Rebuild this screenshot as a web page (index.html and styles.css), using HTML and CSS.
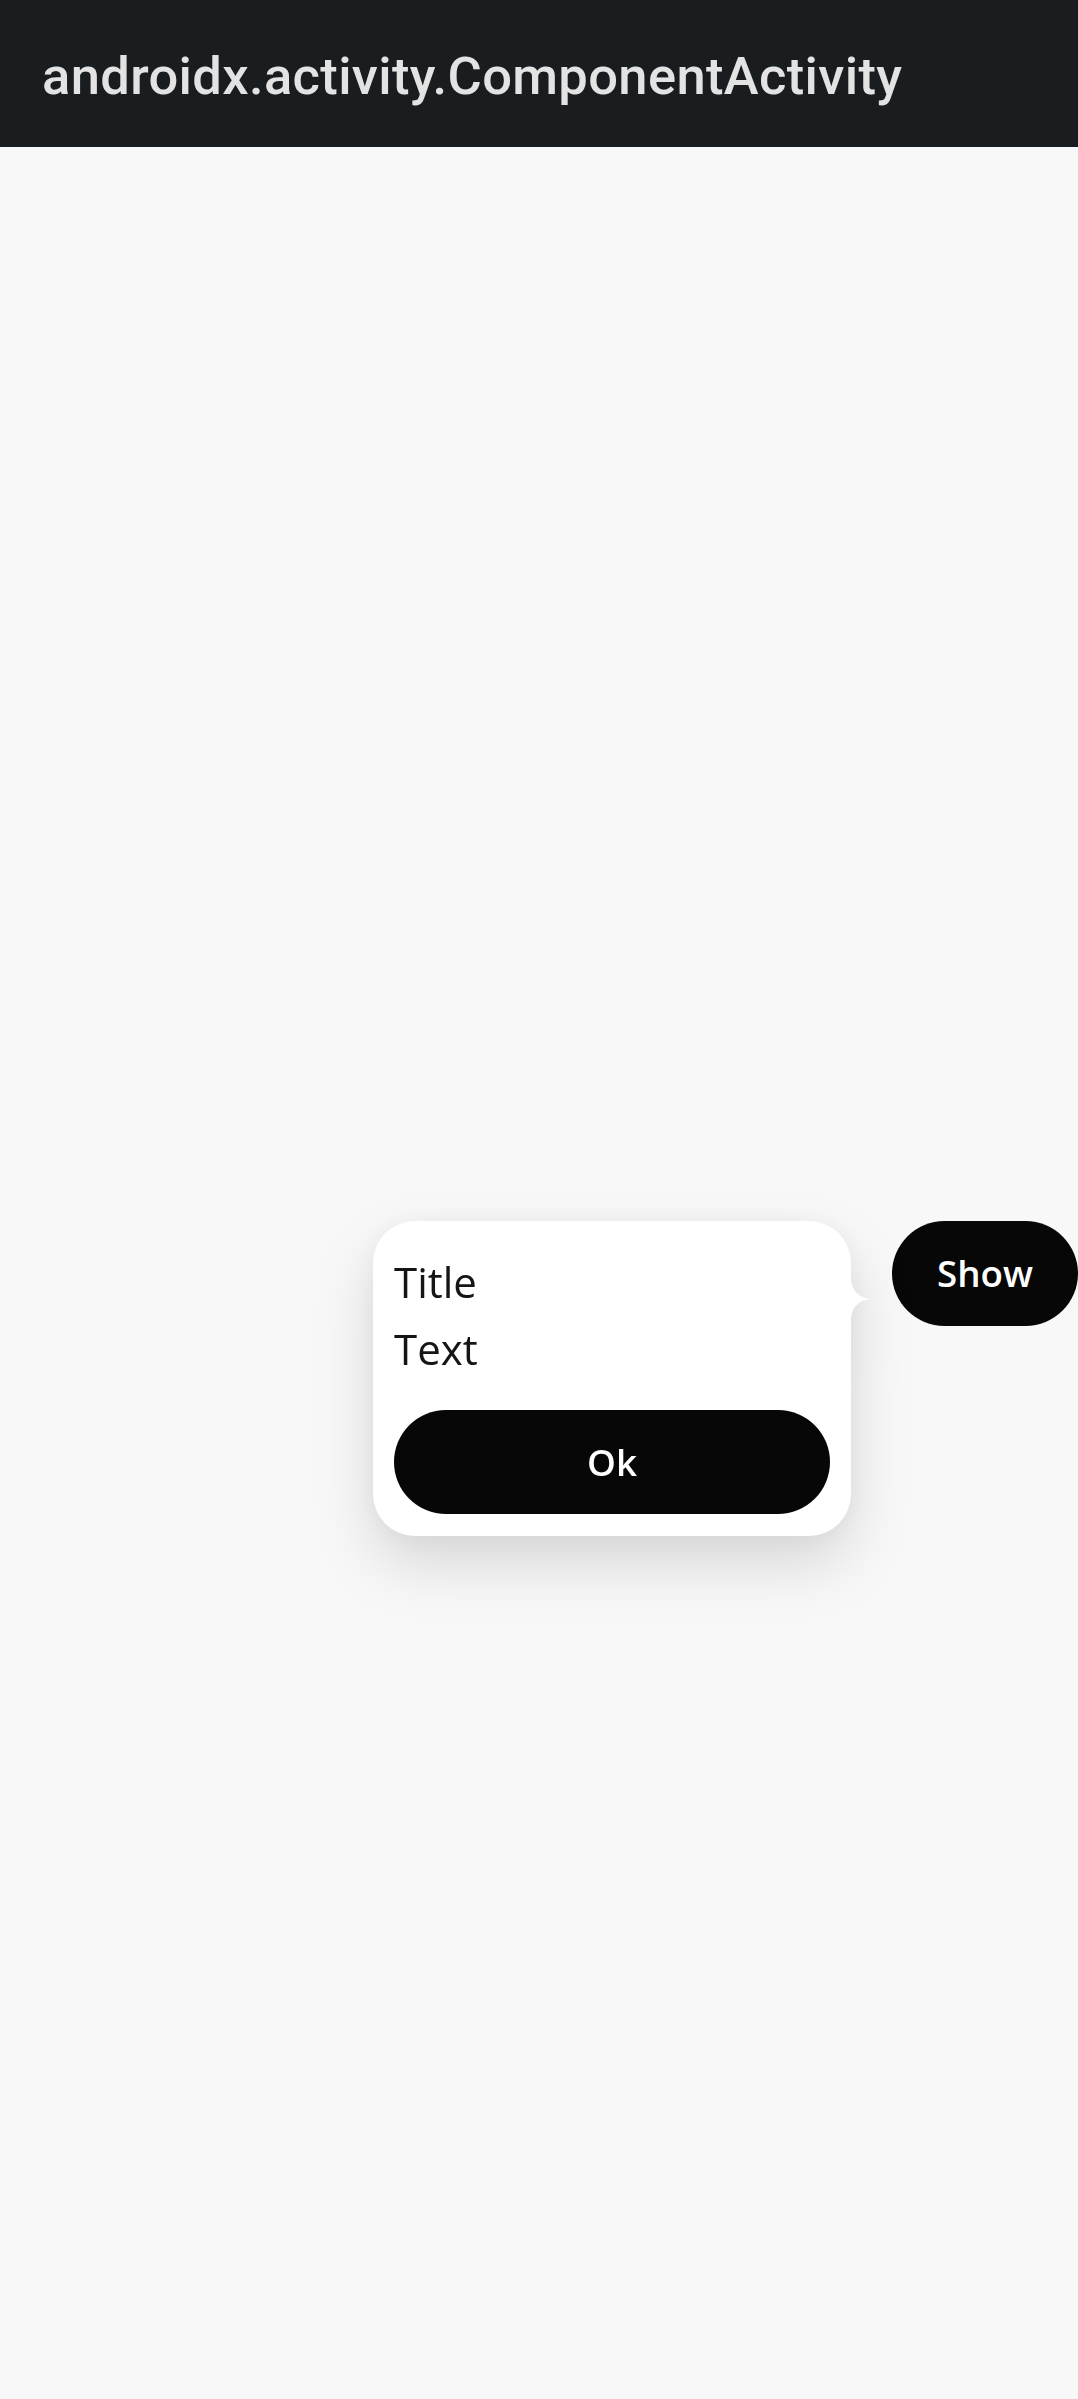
FILE: index.html
```html
<!DOCTYPE html>
<html lang="en">
<head>
<meta charset="utf-8">
<title>androidx.activity.ComponentActivity</title>
<link rel="stylesheet" href="styles.css">
</head>
<body>
<header class="appbar">
  <h1 class="appbar-title">androidx.activity.ComponentActivity</h1>
</header>
<main class="screen">
  <div class="anchor">
    <div class="tooltip">
      <div class="tooltip-body">
        <p class="tooltip-title">Title</p>
        <p class="tooltip-text">Text</p>
        <button class="btn btn-ok" type="button">Ok</button>
      </div>
      <svg class="tooltip-pointer" width="22" height="70" viewBox="0 0 22 70" aria-hidden="true">
        <path d="M0,0 H2 V17 A20,20 0 0 0 22,37 A20,20 0 0 0 2,57 V70 H0 Z" fill="#ffffff"/>
      </svg>
    </div>
    <button class="btn btn-show" type="button">Show</button>
  </div>
</main>
</body>
</html>
```

FILE: styles.css
```css
html, body {
  margin: 0;
  padding: 0;
}

body {
  background: #f8f8f8;
  width: 1078px;
  height: 2399px;
  overflow: hidden;
}

.appbar {
  height: 147px;
  background: #1a1d20;
  display: flex;
  align-items: center;
  padding-left: 42px;
  box-sizing: border-box;
}

.appbar-title {
  margin: 0;
  padding-top: 5px;
  font-family: Roboto, "Liberation Sans", sans-serif;
  font-weight: 500;
  font-size: 52.5px;
  line-height: 1.2;
  color: #e3e3e3;
  letter-spacing: 0.35px;
}

.screen {
  height: 2252px;
  display: flex;
  align-items: center;
  justify-content: flex-end;
}

.anchor {
  position: relative;
}

.btn {
  border: none;
  margin: 0;
  background: #070707;
  color: #ffffff;
  font-family: "Open Sans", "Liberation Sans", sans-serif;
  font-weight: 600;
  font-size: 36.75px;
  cursor: pointer;
  display: flex;
  align-items: center;
  justify-content: center;
}

.btn-show {
  width: 186px;
  height: 105px;
  padding: 0;
  border-radius: 52.5px;
}

.tooltip {
  position: absolute;
  top: 0;
  right: calc(100% + 41px);
  width: 478px;
  filter: drop-shadow(0 28px 30px rgba(0, 0, 0, 0.13)) drop-shadow(0 0 12px rgba(0, 0, 0, 0.04));
}

.tooltip-body {
  background: #ffffff;
  border-radius: 42px;
  padding: 32px 21px 22px;
  display: flex;
  flex-direction: column;
}

.tooltip-title,
.tooltip-text {
  margin: 0;
  font-family: "Open Sans", "Liberation Sans", sans-serif;
  font-weight: 400;
  font-size: 42px;
  line-height: 57px;
  color: #151515;
}

.tooltip-text {
  margin-top: 10px;
}

.btn-ok {
  margin-top: 33px;
  width: 100%;
  height: 104px;
  border-radius: 52px;
  padding: 0;
}

.tooltip-pointer {
  position: absolute;
  top: 41px;
  right: -20px;
  display: block;
}
```
